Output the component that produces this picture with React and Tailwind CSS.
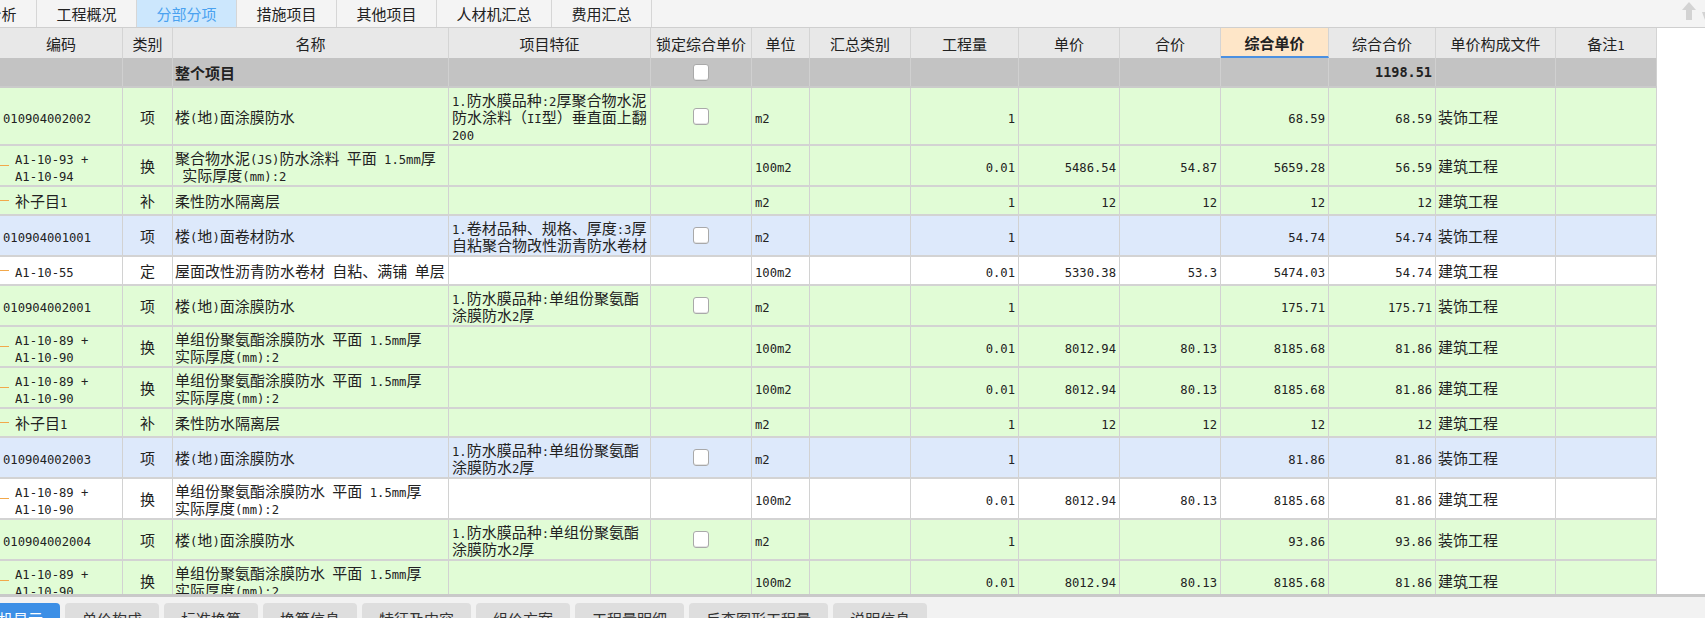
import React from "react";

const COLS =
  "grid-cols-[123px_50px_276px_202px_101px_58px_101px_108px_101px_101px_108px_107px_120px_101px]";

const topTabs = ["工程概况", "分部分项", "措施项目", "其他项目", "人材机汇总", "费用汇总"];
const bottomTabs = ["单价构成", "标准换算", "换算信息", "特征及内容", "组价方案", "工程量明细", "反查图形工程量", "说明信息"];

const headers = [
  "编码", "类别", "名称", "项目特征", "锁定综合单价", "单位", "汇总类别",
  "工程量", "单价", "合价", "综合单价", "综合合价", "单价构成文件", "备注1",
];

const feat1 = "1.防水膜品种:单组份聚氨酯\n涂膜防水2厚";
const name89 = "单组份聚氨酯涂膜防水 平面 1.5mm厚\n实际厚度(mm):2";

const rows = [
  {
    code: "010904002002", cat: "项", name: "楼(地)面涂膜防水",
    feat: "1.防水膜品种:2厚聚合物水泥\n防水涂料（II型）垂直面上翻\n200",
    lock: true, unit: "m2", qty: "1", up: "68.59", tp: "68.59", file: "装饰工程",
    bg: "bg-[#e1fcd6]", h: "h-[58px]",
  },
  {
    code: "A1-10-93 +\nA1-10-94", sub: true, cat: "换",
    name: "聚合物水泥(JS)防水涂料 平面 1.5mm厚\n 实际厚度(mm):2",
    unit: "100m2", qty: "0.01", price: "5486.54", sum: "54.87", up: "5659.28", tp: "56.59", file: "建筑工程",
    bg: "bg-[#e1fcd6]", h: "h-[41px]",
  },
  {
    code: "补子目1", sub: true, cat: "补", name: "柔性防水隔离层",
    unit: "m2", qty: "1", price: "12", sum: "12", up: "12", tp: "12", file: "建筑工程",
    bg: "bg-[#e1fcd6]", h: "h-[29px]",
  },
  {
    code: "010904001001", cat: "项", name: "楼(地)面卷材防水",
    feat: "1.卷材品种、规格、厚度:3厚\n自粘聚合物改性沥青防水卷材",
    lock: true, unit: "m2", qty: "1", up: "54.74", tp: "54.74", file: "装饰工程",
    bg: "bg-[#dde9fb]", h: "h-[41px]",
  },
  {
    code: "A1-10-55", sub: true, cat: "定", name: "屋面改性沥青防水卷材 自粘、满铺 单层",
    unit: "100m2", qty: "0.01", price: "5330.38", sum: "53.3", up: "5474.03", tp: "54.74", file: "建筑工程",
    bg: "bg-white", h: "h-[29px]",
  },
  {
    code: "010904002001", cat: "项", name: "楼(地)面涂膜防水", feat: feat1,
    lock: true, unit: "m2", qty: "1", up: "175.71", tp: "175.71", file: "装饰工程",
    bg: "bg-[#e1fcd6]", h: "h-[41px]",
  },
  {
    code: "A1-10-89 +\nA1-10-90", sub: true, cat: "换", name: name89,
    unit: "100m2", qty: "0.01", price: "8012.94", sum: "80.13", up: "8185.68", tp: "81.86", file: "建筑工程",
    bg: "bg-[#e1fcd6]", h: "h-[41px]",
  },
  {
    code: "A1-10-89 +\nA1-10-90", sub: true, cat: "换", name: name89,
    unit: "100m2", qty: "0.01", price: "8012.94", sum: "80.13", up: "8185.68", tp: "81.86", file: "建筑工程",
    bg: "bg-[#e1fcd6]", h: "h-[41px]",
  },
  {
    code: "补子目1", sub: true, cat: "补", name: "柔性防水隔离层",
    unit: "m2", qty: "1", price: "12", sum: "12", up: "12", tp: "12", file: "建筑工程",
    bg: "bg-[#e1fcd6]", h: "h-[29px]",
  },
  {
    code: "010904002003", cat: "项", name: "楼(地)面涂膜防水", feat: feat1,
    lock: true, unit: "m2", qty: "1", up: "81.86", tp: "81.86", file: "装饰工程",
    bg: "bg-[#dde9fb]", h: "h-[41px]",
  },
  {
    code: "A1-10-89 +\nA1-10-90", sub: true, cat: "换", name: name89,
    unit: "100m2", qty: "0.01", price: "8012.94", sum: "80.13", up: "8185.68", tp: "81.86", file: "建筑工程",
    bg: "bg-white", h: "h-[41px]",
  },
  {
    code: "010904002004", cat: "项", name: "楼(地)面涂膜防水", feat: feat1,
    lock: true, unit: "m2", qty: "1", up: "93.86", tp: "93.86", file: "装饰工程",
    bg: "bg-[#e1fcd6]", h: "h-[41px]",
  },
  {
    code: "A1-10-89 +\nA1-10-90", sub: true, cat: "换", name: name89,
    unit: "100m2", qty: "0.01", price: "8012.94", sum: "80.13", up: "8185.68", tp: "81.86", file: "建筑工程",
    bg: "bg-[#e1fcd6]", h: "h-[41px]",
  },
];

// ascii runs get a half-width mono font, the rest stays in the CJK font
function T({ s }) {
  if (!s) return null;
  const parts = s.split(/([\x00-\x7F]+)/).filter(Boolean);
  return (
    <div>
      {parts.map((p, i) =>
        /^[\x00-\x7F]+$/.test(p) ? (
          <span key={i} className="font-['DejaVu_Sans_Mono',monospace] text-[12.2px] leading-[12px]">
            {p}
          </span>
        ) : (
          <span key={i}>{p}</span>
        )
      )}
    </div>
  );
}

function Checkbox() {
  return <div className="w-[16px] h-[17px] rounded-[3px] border border-[#a9a9a9] bg-white shadow-[inset_0_-1px_0_#e4e4e4]" />;
}

const cell = "border-r border-[#d2d2d2] flex items-center overflow-hidden whitespace-pre";
const num = `${cell} justify-end pr-[3px]`;

function Row({ r }) {
  return (
    <div className={`grid ${COLS} w-[1657px] ${r.bg} ${r.h} border-b-2 border-[#d3d3d3]`}>
      <div className={`${cell} ${r.sub ? "" : "pl-[3px]"}`}>
        {r.sub && <span className="w-[9px] h-[1.5px] bg-[#f2a84a] mr-[6px] shrink-0" />}
        <T s={r.code} />
      </div>
      <div className={`${cell} justify-center`}>{r.cat}</div>
      <div className={`${cell} pl-[2px]`}><T s={r.name} /></div>
      <div className={`${cell} pl-[3px]`}><T s={r.feat} /></div>
      <div className={`${cell} justify-center`}>{r.lock && <Checkbox />}</div>
      <div className={`${cell} pl-[3px]`}><T s={r.unit} /></div>
      <div className={cell} />
      <div className={num}><T s={r.qty} /></div>
      <div className={num}><T s={r.price} /></div>
      <div className={num}><T s={r.sum} /></div>
      <div className={num}><T s={r.up} /></div>
      <div className={num}><T s={r.tp} /></div>
      <div className={`${cell} pl-[2px]`}>{r.file}</div>
      <div className={cell} />
    </div>
  );
}

export default function App() {
  return (
    <div className="w-[1705px] h-[618px] overflow-hidden bg-white flex flex-col font-['Noto_Sans_CJK_SC',sans-serif] text-[15px] leading-[17px] text-[#222]">
      {/* top tabs */}
      <div className="h-[28px] shrink-0 flex bg-[#f4f4f4] border-b border-[#cfcfcf]">
        <div className="w-[100px] ml-[-63px] flex items-center justify-center border-r border-[#d6d6d6]">造价分析</div>
        {topTabs.map((t) => (
          <div
            key={t}
            className={`${t === "人材机汇总" ? "w-[115px]" : "w-[100px]"} flex items-center justify-center border-r border-[#d6d6d6] ${
              t === "分部分项" ? "bg-[#cce7fd] text-[#4aa2f0]" : ""
            }`}
          >
            {t}
          </div>
        ))}
        <div className="flex-1" />
        <svg width="16" height="20" viewBox="0 0 16 20" className="mt-[1px] mr-[2px]">
          <path d="M8 1 L15 9 L11 9 L11 19 L5 19 L5 9 L1 9 Z" fill="#d3d3d3" />
        </svg>
        <svg width="6" height="20" viewBox="0 0 6 20" className="mt-[1px]">
          <path d="M3 11 L6 11 L6 19 Z" fill="#d3d3d3" />
        </svg>
      </div>

      {/* grid */}
      <div className="h-[566px] shrink-0 overflow-hidden">
        <div className={`grid ${COLS} w-[1657px] h-[30px] bg-[#e8e8e8]`}>
          {headers.map((h) => (
            <div
              key={h}
              className={`border-r border-[#d4d4d4] flex items-center justify-center ${
                h === "综合单价" ? "bg-[#fee6c8] font-bold border-b-2 border-b-[#4a90e2]" : ""
              }`}
            >
              <T s={h} />
            </div>
          ))}
        </div>
        <div className={`grid ${COLS} w-[1657px] h-[30px] bg-[#c3c3c3] border-b-2 border-[#cbcbcb]`}>
          <div className="border-r border-[#d0d0d0]" />
          <div className="border-r border-[#d0d0d0]" />
          <div className="border-r border-[#d0d0d0] flex items-center pl-[2px] font-bold">整个项目</div>
          <div className="border-r border-[#d0d0d0]" />
          <div className="border-r border-[#d0d0d0] flex items-center justify-center"><Checkbox /></div>
          <div className="border-r border-[#d0d0d0]" />
          <div className="border-r border-[#d0d0d0]" />
          <div className="border-r border-[#d0d0d0]" />
          <div className="border-r border-[#d0d0d0]" />
          <div className="border-r border-[#d0d0d0]" />
          <div className="border-r border-[#d0d0d0]" />
          <div className="border-r border-[#d0d0d0] flex items-center justify-end pr-[3px]">
            <span className="font-['DejaVu_Sans_Mono',monospace] text-[13.5px] font-bold">1198.51</span>
          </div>
          <div className="border-r border-[#d0d0d0]" />
          <div className="border-r border-[#d0d0d0]" />
        </div>
        {rows.map((r, i) => (
          <Row key={i} r={r} />
        ))}
      </div>

      {/* bottom tabs */}
      <div className="flex-1 bg-[#f2f2f2] border-t-[3px] border-[#c9c9c9] flex items-start gap-[5px] pt-[6px]">
        <div className="ml-[-49px] px-[17px] h-[30px] shrink-0 flex items-center rounded-t-[4px] bg-[#3c8fe6] text-white">
          工料机显示
        </div>
        {bottomTabs.map((t) => (
          <div key={t} className="px-[17px] h-[30px] shrink-0 flex items-center rounded-t-[4px] bg-[#dedede] text-[#333]">
            {t}
          </div>
        ))}
      </div>
    </div>
  );
}
